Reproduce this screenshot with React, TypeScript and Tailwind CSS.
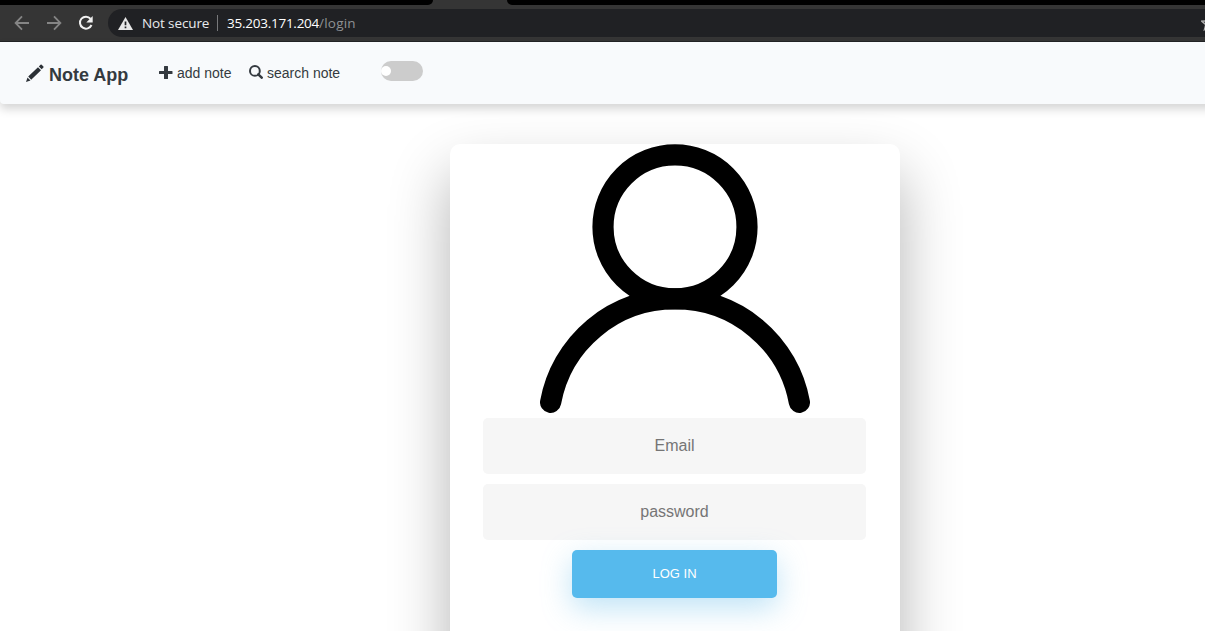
import React from "react";

function BrowserBar() {
  return (
    <div className="h-[42px] w-full shrink-0 bg-[#353535] border-b border-[#222325] flex flex-col overflow-hidden">
      <div className="flex h-[5px] w-full shrink-0">
        <div className="w-[433px] shrink-0 rounded-br-[5px] bg-black" />
        <div className="w-[74px] shrink-0" />
        <div className="flex-1 rounded-bl-[5px] bg-black" />
      </div>
      <div className="flex h-7 mt-1 w-[1230px] shrink-0 items-center">
        <svg className="ml-[14px] h-4 w-4 shrink-0" viewBox="0 0 16 16" fill="none" stroke="#858585" strokeWidth="1.8">
          <path d="M15 8H2M8 1.4L1.6 8L8 14.6" />
        </svg>
        <svg className="ml-4 h-4 w-4 shrink-0" viewBox="0 0 16 16" fill="none" stroke="#858585" strokeWidth="1.8">
          <path d="M1 8h13M8 1.4L14.4 8L8 14.6" />
        </svg>
        <svg className="ml-4 h-4 w-4 shrink-0" viewBox="0 0 16 16">
          <path d="M12.600 3.800A6 6 0 1 0 13.500 10" fill="none" stroke="#f1f1f1" strokeWidth="2" />
          <path d="M14.700 1v6.400H8.300z" fill="#f1f1f1" />
        </svg>
        <div className="ml-[14px] flex h-7 flex-1 items-center rounded-l-full bg-[#202124] font-['Open_Sans','Noto_Sans',sans-serif] text-[13.5px] leading-5 text-[#e8eaed]">
          <svg className="ml-[10px] h-[13px] w-[15px] shrink-0" viewBox="0 0 15 13">
            <path d="M7.5 0L15 13H0z" fill="#e8e8e8" />
            <path d="M7.5 4.5v3.700M7.5 9.5v1.800" stroke="#202124" strokeWidth="1.700" />
          </svg>
          <span className="ml-[9px] w-[67px] shrink-0 whitespace-nowrap tracking-[-0.12px]">Not secure</span>
          <span className="ml-2 h-4 w-px shrink-0 bg-[#77787a]" />
          <span className="ml-[9px] w-[130px] shrink-0 whitespace-nowrap tracking-[-0.25px] text-white">
            35.203.171.204<span className="tracking-[0.2px] text-[#8f9194]">/login</span>
          </span>
          <svg className="ml-[844px] h-4 w-4 shrink-0" viewBox="0 0 16 16" fill="none" stroke="#b0b0b0" strokeWidth="1.5">
            <path d="M8 1l2 4.8 5.2.4-4 3.4 1.3 5L8 12l-4.5 2.6 1.3-5-4-3.4L6 5.8z" />
          </svg>
        </div>
      </div>
    </div>
  );
}

function Navbar() {
  return (
    <nav className="flex h-[62px] w-[1350px] shrink-0 items-start rounded-b bg-[#f8fafc] text-[#343a40] shadow-[0_5px_10px_rgba(0,0,0,0.17)]">
      <div className="ml-[26px] mt-[22px] flex h-[22px] w-[133px] shrink-0 items-start">
        <svg className="h-[18px] w-[18px] shrink-0" viewBox="0 0 18 18" fill="#2b3036">
          <path d="M0 18l1.500-4.500 3 3zM2.200 12.500L12 3.200l3 3-9.800 9.600zM12.800 2.400L14.500.7q.6-.6 1.200 0l1.700 1.700q.6.6 0 1.200l-1.700 1.700z" />
        </svg>
        <span className="ml-[5px] whitespace-nowrap text-[18px] font-bold leading-[22px]">Note App</span>
      </div>
      <div className="mt-[21px] flex h-5 w-[90px] shrink-0 items-start">
        <svg className="mt-[3px] h-[13px] w-[14px] shrink-0" viewBox="0 0 14 13" fill="#343a40">
          <path d="M5 .5q0-.5.5-.5h3q.5 0 .5.5V5h4q.5 0 .5.5v2q0 .5-.5.5H9v4.5q0 .5-.5.5h-3q-.5 0-.5-.5V8H.5Q0 8 0 7.500v-2Q0 5 .5 5H5z" />
        </svg>
        <span className="ml-[4px] whitespace-nowrap text-[14px] leading-5">add note</span>
      </div>
      <div className="mt-[21px] flex h-5 w-[132px] shrink-0 items-start">
        <svg className="mt-[2px] h-[14px] w-[14px] shrink-0" viewBox="0 0 14 14" fill="none" stroke="#343a40">
          <circle cx="5.900" cy="5.900" r="4.900" strokeWidth="2" />
          <path d="M9.300 9.300l3.400 3.400" strokeWidth="2.500" strokeLinecap="round" />
        </svg>
        <span className="ml-[4px] whitespace-nowrap text-[14px] leading-5">search note</span>
      </div>
      <div className="mt-[19px] flex h-5 w-[42px] shrink-0 items-center rounded-full bg-[#ccc]">
        <span className="h-[10px] w-[10px] rounded-full bg-white" />
      </div>
    </nav>
  );
}

function LoginCard() {
  return (
    <form className="mx-auto mt-10 flex h-[570px] w-[450px] shrink-0 flex-col items-center rounded-[10px] bg-white pr-px shadow-[0_30px_60px_0_rgba(0,0,0,0.3)]">
      <svg className="ml-px h-[269px] w-[270px] shrink-0" viewBox="540 144 270 269" fill="none" stroke="black" strokeWidth="21.2">
        <circle cx="675" cy="226.900" r="72" />
        <path d="M550.600 402.300A126.500 126.500 0 0 1 799.400 402.300" strokeLinecap="round" />
      </svg>
      <input
        className="mt-[5px] h-14 w-[383px] shrink-0 rounded-[5px] bg-[#f6f6f6] text-center text-[16px] placeholder:text-[#757575]"
        placeholder="Email"
      />
      <input
        type="password"
        className="mt-[10px] h-14 w-[383px] shrink-0 rounded-[5px] bg-[#f6f6f6] text-center text-[16px] placeholder:text-[#757575]"
        placeholder="password"
      />
      <button
        type="button"
        className="mt-[10px] h-12 w-[205px] shrink-0 rounded-[5px] bg-[#56baed] pb-px text-[13px] uppercase text-white shadow-[0_10px_30px_0_rgba(95,186,233,0.4)]"
      >
        Log In
      </button>
    </form>
  );
}

export default function App() {
  return (
    <div className="flex h-[631px] w-full flex-col overflow-hidden bg-white font-['Liberation_Sans',Arial,sans-serif]">
      <BrowserBar />
      <Navbar />
      <div className="flex w-[1350px] shrink-0">
        <LoginCard />
      </div>
    </div>
  );
}
